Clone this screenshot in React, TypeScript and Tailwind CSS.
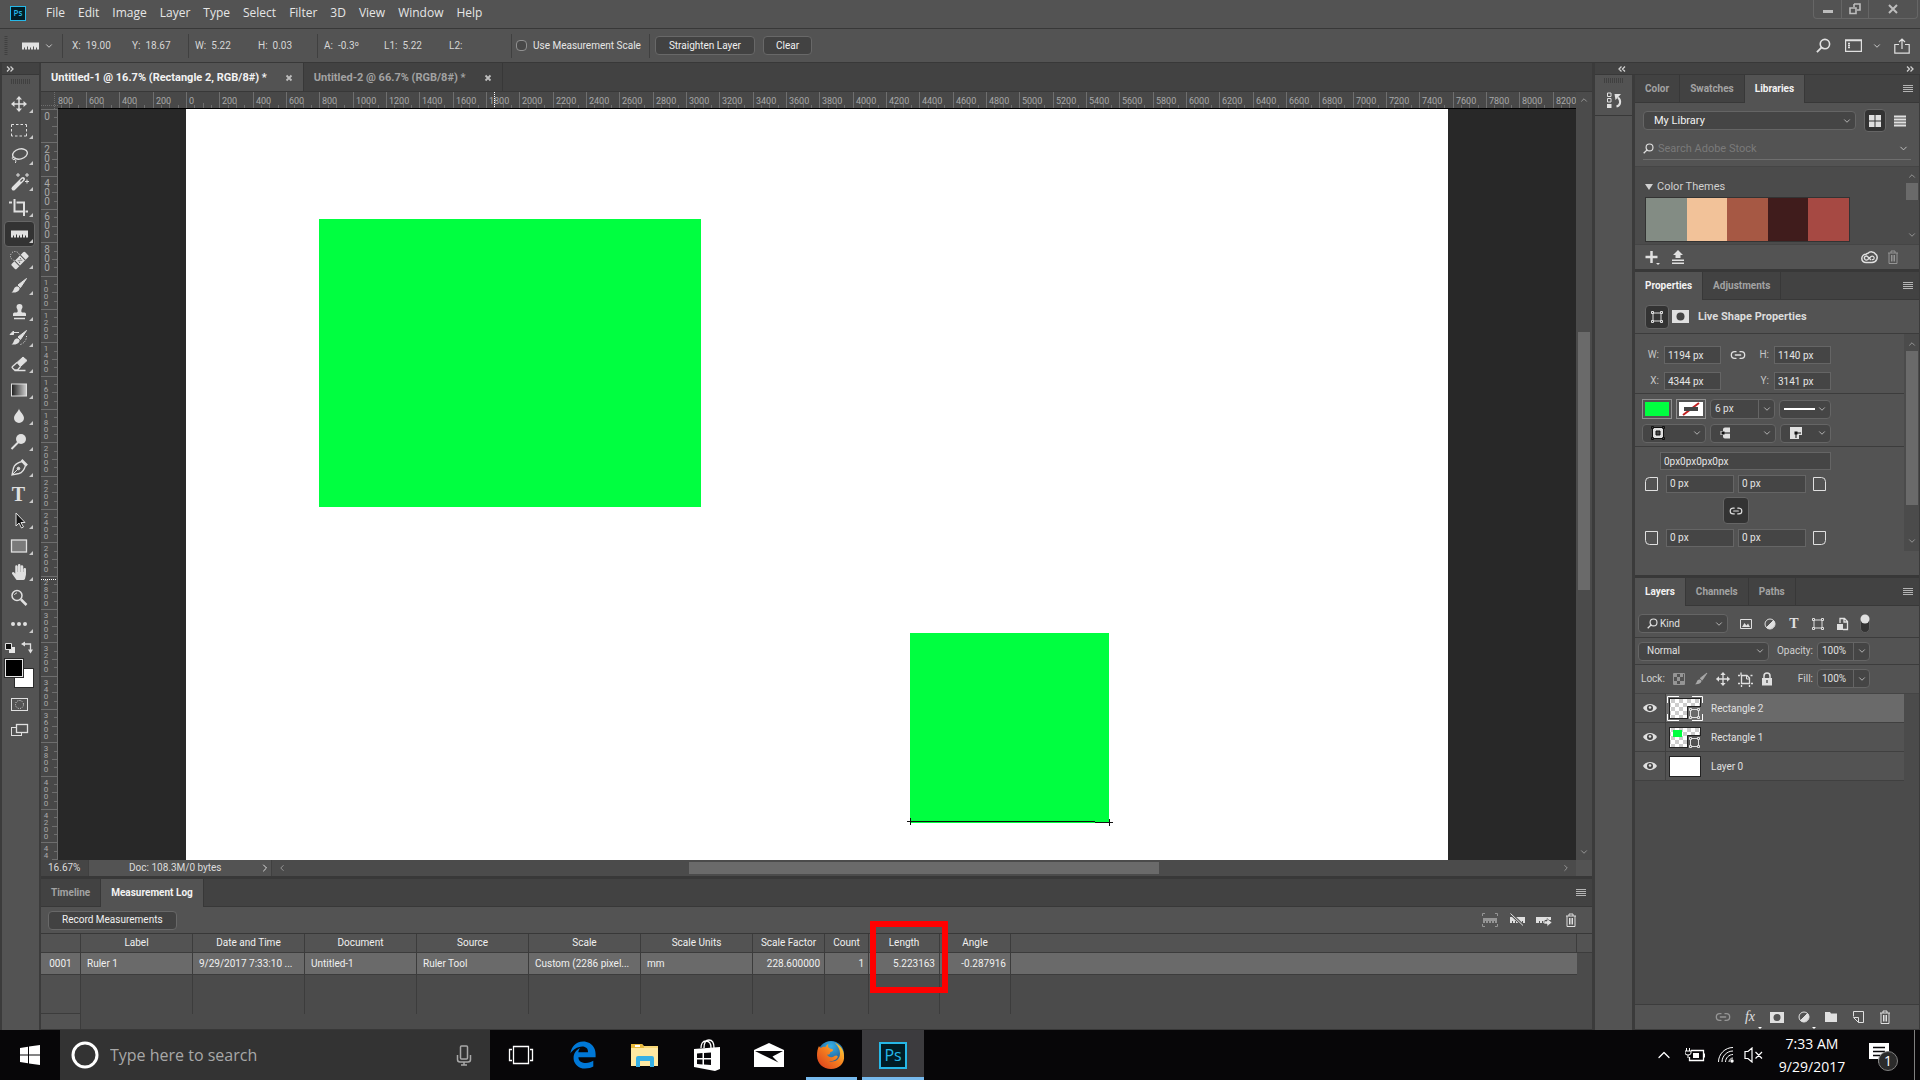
import React, { useState } from 'react'
import { ChevronDown, ChevronLeft, ChevronRight, ChevronUp, Link2 } from 'lucide-react'
import { FaEdgeLegacy, FaHandPaper } from 'react-icons/fa'

const menus = ['File', 'Edit', 'Image', 'Layer', 'Type', 'Select', 'Filter', '3D', 'View', 'Window', 'Help']

interface IconProps {
  size?: number
  className?: string
  children?: React.ReactNode
}

const Icon = ({ size = 16, className = '', children }: IconProps) => (
  <svg
    width={size}
    height={size}
    viewBox={`0 0 ${size} ${size}`}
    fill="none"
    stroke="currentColor"
    className={`shrink-0 ${className}`}
    aria-hidden="true"
  >
    {children}
  </svg>
)

/* ---------- small shared icons ---------- */

const RulerIcon = () => (
  <Icon size={20}>
    <path
      d="M2 6.5h17v7h-2v-2h-1v2h-2v-3h-1v3h-2v-2h-1v2H8v-3H7v3H5v-2H4v2H2z"
      fill="currentColor"
      stroke="none"
    />
  </Icon>
)

const MenuLines = () => (
  <Icon size={12} className="text-[#b4b4b4]">
    <path d="M1 2.5h10M1 4.5h10M1 6.5h10M1 8.5h10" />
  </Icon>
)

const DoubleArrow = ({ left = false }: { left?: boolean }) => (
  <Icon size={8} className={`text-[#cfcfcf] ${left ? 'rotate-180' : ''}`}>
    <path d="M1 1.5L3.5 4 1 6.5M4.5 1.5L7 4 4.5 6.5" strokeWidth="1.3" />
  </Icon>
)

const SearchIcon = ({ size = 16 }: { size?: number }) => (
  <svg width={size} height={size} viewBox="0 0 16 16" fill="none" stroke="currentColor" aria-hidden="true">
    <circle cx="9.5" cy="6.5" r="5" strokeWidth="1.7" />
    <path d="M6 10l-5 5" strokeWidth="2" />
  </svg>
)

const TrashIcon = ({ className = '' }: { className?: string }) => (
  <Icon className={className}>
    <path d="M3 4h10M6 4V2h4v2M4 4v10.5h8V4M6.5 6v6.5M8 6v6.5M9.5 6v6.5" />
  </Icon>
)

const ShapeIcon = () => (
  <Icon>
    <path d="M4 4h8v8H4z" />
    <path d="M2.500 2.500h2v2h-2zM11.500 2.500h2v2h-2zM2.500 11.500h2v2h-2zM11.500 11.500h2v2h-2z" className="fill-[#535353]" />
  </Icon>
)

const MaskIcon = () => (
  <Icon>
    <path fillRule="evenodd" d="M1 3h14v11H1zM8 5a3.500 3.500 0 100 7 3.500 3.500 0 000-7z" fill="currentColor" stroke="none" />
  </Icon>
)

const AdjustIcon = () => (
  <Icon>
    <circle cx="8" cy="8" r="5" />
    <path d="M11.500 4.500A5 5 0 014.500 11.500z" fill="currentColor" />
  </Icon>
)

const MoveShape = () => (
  <>
    <path d="M10 4v12M4 10h12" strokeWidth="1.5" />
    <path d="M10 2l3 3.500H7zM10 18l3-3.500H7zM2 10l3.500-3v6zM18 10l-3.500-3v6z" fill="currentColor" stroke="none" />
  </>
)

const BrushShape = () => (
  <>
    <path d="M17.500 2.500L9 9l2.500 2.500z" fill="currentColor" strokeLinejoin="round" />
    <path d="M8.500 10.500c1.500 0 2.500 1.500 2 2.700C9.500 16 6 17 2.500 16.500c2-1 2-3 3-4.700.7-1 2-1.300 3-1.300z" fill="currentColor" stroke="none" />
  </>
)

/* ---------- toolbox ---------- */

const tools: { name: string; icon: React.ReactNode }[] = [
  { name: 'Move', icon: <Icon size={20}><MoveShape /></Icon> },
  {
    name: 'Marquee',
    icon: (
      <Icon size={20}>
        <path d="M2.500 7V4.500H5M7 4.500h2.500M11.500 4.500H14M16 4.500h1.500V7M17.500 9v2.500M17.500 13.500v2.500H15M13 16h-2.500M8.500 16H6M4 16H2.500v-2.500M2.500 11.500V9" />
      </Icon>
    )
  },
  {
    name: 'Lasso',
    icon: (
      <Icon size={20}>
        <ellipse cx="11" cy="8" rx="7.500" ry="5" transform="rotate(-14 11 8)" strokeWidth="1.400" />
        <path d="M4 10.500c-1.500 1.500-.5 3.500 1 3.200 1.500-.2 2-2 .5-2.700M5.500 13c1.500 1 1.800 2.500.8 4" />
      </Icon>
    )
  },
  {
    name: 'Magic Wand',
    icon: (
      <Icon size={20}>
        <path d="M4.500 16.500L14 7" strokeWidth="4" strokeLinecap="round" />
        <path d="M11.500 9.500L14 7" strokeWidth="1.500" className="stroke-[#535353]" />
        <path d="M9 1v4M7 3h4M18 1v4M16 3h4M18 7.500v4M16 9.500h4" />
      </Icon>
    )
  },
  {
    name: 'Crop',
    icon: (
      <Icon size={20}>
        <path d="M0 4.500h3M5.500 1v12.500H14M7.500 4.500h7.500V18M16.500 13.500H19" strokeWidth="2" />
      </Icon>
    )
  },
  { name: 'Ruler', icon: <RulerIcon /> },
  {
    name: 'Healing Brush',
    icon: (
      <Icon size={20}>
        <circle cx="6" cy="6" r="4.500" strokeDasharray="1 1.500" />
        <g transform="rotate(-45 11 10.500)">
          <rect x="1.500" y="7" width="19" height="7" rx="1.500" fill="currentColor" stroke="none" />
          <path d="M7 7v7M15 7v7" className="stroke-[#535353]" />
          <path d="M9 9.500h1M12 9.500h1M9 11.500h1M12 11.500h1M10.500 10.500h1" className="stroke-[#535353]" />
        </g>
      </Icon>
    )
  },
  { name: 'Brush', icon: <Icon size={20}><BrushShape /></Icon> },
  {
    name: 'Clone Stamp',
    icon: (
      <Icon size={20}>
        <path
          d="M10.500 2a3 3 0 013 3c0 1.500-1.200 2-1.200 4 0 1 .7 1.500 1.700 1.500h1.500a1.500 1.500 0 011.500 1.500v2H4v-2a1.500 1.500 0 011.500-1.500H7c1 0 1.700-.5 1.700-1.500 0-2-1.200-2.500-1.200-4a3 3 0 013-3z"
          fill="currentColor"
          stroke="none"
        />
        <path d="M5 16.500h11" strokeWidth="1.500" />
      </Icon>
    )
  },
  {
    name: 'History Brush',
    icon: (
      <Icon size={20}>
        <BrushShape />
        <path d="M5 4.500h5M1 6.500L4.500 3v3.500z" fill="currentColor" />
        <path d="M17.500 8c0 4-2 7-6 8.500" strokeDasharray="1 1.500" />
      </Icon>
    )
  },
  {
    name: 'Eraser',
    icon: (
      <Icon size={20}>
        <path d="M8 8.500l6-5.500 4 3.500-6.500 6z" fill="currentColor" />
        <path d="M8 8.500L3.500 12.500c-.6.600-.6 1 0 1.500l2 2h3l3-3.500M5.500 16.500h11" strokeWidth="1.300" />
      </Icon>
    )
  },
  {
    name: 'Gradient',
    icon: (
      <Icon size={20}>
        <defs>
          <linearGradient id="tool-gradient">
            <stop offset="0" stopColor="#1c1c1c" />
            <stop offset="1" stopColor="#d0d0d0" />
          </linearGradient>
        </defs>
        <rect x="2.500" y="4" width="15" height="12" fill="url(#tool-gradient)" />
      </Icon>
    )
  },
  {
    name: 'Blur',
    icon: (
      <Icon size={20}>
        <path d="M10 2.500c.5 3 5 6 5 9.500a5 5 0 01-10 0c0-3.500 4.500-6.500 5-9.500z" fill="currentColor" stroke="none" />
      </Icon>
    )
  },
  {
    name: 'Dodge',
    icon: (
      <Icon size={20}>
        <circle cx="12" cy="7" r="5" fill="currentColor" stroke="none" />
        <path d="M9 10.500L2.500 17" strokeWidth="2" />
      </Icon>
    )
  },
  {
    name: 'Pen',
    icon: (
      <Icon size={20}>
        <path d="M13 3.500c-4 1-7.500 2.500-8.500 6.500L3 17l7-1.500c4-1 5.500-4.500 6.500-8z" strokeWidth="1.300" />
        <path d="M3.500 16.500L9 11" />
        <circle cx="9.500" cy="10.500" r="1.300" fill="currentColor" />
        <path d="M12.500 2l5.500 5.500" strokeWidth="2.500" />
      </Icon>
    )
  },
  { name: 'Type', icon: <span className="font-['Liberation_Serif',serif] text-xl font-bold leading-5">T</span> },
  {
    name: 'Path Selection',
    icon: (
      <Icon size={20}>
        <path d="M7 3v13l3-3 2.500 5 2-1-2.500-4.500h4z" fill="#161616" />
      </Icon>
    )
  },
  {
    name: 'Rectangle',
    icon: (
      <Icon size={20}>
        <rect x="2.500" y="4" width="15" height="12" fill="#7a7a7a" strokeWidth="1.300" />
      </Icon>
    )
  },
  { name: 'Hand', icon: <FaHandPaper size={16} /> },
  {
    name: 'Zoom',
    icon: (
      <Icon size={20}>
        <circle cx="8" cy="7.500" r="5" strokeWidth="1.500" />
        <path d="M5.500 7c.4-1.200 1.200-2 2.500-2" />
        <path d="M12 11.500l5.500 5.500" strokeWidth="2.500" />
      </Icon>
    )
  },
  {
    name: 'Edit Toolbar',
    icon: (
      <Icon size={20}>
        <path d="M4 10h.01M10 10h.01M16 10h.01" strokeWidth="4" strokeLinecap="round" />
      </Icon>
    )
  }
]

const Toolbox = () => {
  const [active, setActive] = useState('Ruler')

  return (
    <aside className="flex w-[41px] shrink-0 flex-col border-x-2 border-[#3b3b3b]">
      <div className="flex h-3 items-center border-b border-[#383838] bg-[#424242] pl-1">
        <DoubleArrow />
      </div>
      <div className="flex h-4 justify-center pt-1">
        <Grip />
      </div>
      <div className="flex flex-col pl-[2px] pr-1">
        {tools.map((tool) => (
          <button
            key={tool.name}
            aria-label={tool.name}
            onClick={() => setActive(tool.name)}
            className={`relative flex h-[26px] items-center justify-center rounded-sm border pr-[2px] ${
              active === tool.name ? 'border-[#666] bg-[#333]' : 'border-transparent'
            }`}
          >
            {tool.icon}
            {tool.name !== 'Zoom' && (
              <svg className="absolute bottom-[3px] right-px" width="4" height="4" aria-hidden="true">
                <path d="M4 0v4H0z" fill="#c8c8c8" />
              </svg>
            )}
          </button>
        ))}
      </div>
      <div className="flex justify-between pl-[2px] pr-1 pt-1">
        <button aria-label="Default colors">
          <Icon size={12}>
            <path d="M5 5h6v6H5z" fill="#e6e6e6" stroke="none" />
            <path d="M1.500 1.500h6v6h-6z" fill="#111" />
          </Icon>
        </button>
        <button aria-label="Switch colors">
          <Icon size={14}>
            <path d="M3 3h6.500v7" strokeWidth="1.300" />
            <path d="M4 .5v5L0 3zM7 8.500h5l-2.500 4z" fill="currentColor" stroke="none" />
          </Icon>
        </button>
      </div>
      <svg width="35" height="36" aria-hidden="true">
        <rect x="12.500" y="13.500" width="19" height="19" fill="#fff" stroke="#2b2b2b" />
        <rect x="2.500" y="3.500" width="19" height="19" fill="#2b2b2b" stroke="#2b2b2b" />
        <rect x="3.500" y="4.500" width="17" height="17" fill="#000" stroke="#e6e6e6" />
      </svg>
      <button aria-label="Quick mask" className="flex h-[26px] items-center justify-center pr-1">
        <Icon size={20}>
          <rect x="2.500" y="4.500" width="16" height="12" />
          <circle cx="10.500" cy="10.500" r="4" strokeDasharray="1 1.300" />
        </Icon>
      </button>
      <button aria-label="Screen mode" className="flex h-[26px] items-center justify-center pr-1">
        <Icon size={20}>
          <rect x="2.500" y="7.500" width="10" height="8" />
          <rect x="7.500" y="4.500" width="11" height="8" className="fill-[#535353]" strokeWidth="1.300" />
        </Icon>
      </button>
    </aside>
  )
}

const Grip = () => (
  <svg width="20" height="5" aria-hidden="true">
    <path d="M.5 0v5M2.500 0v5M4.500 0v5M6.500 0v5M8.500 0v5M10.500 0v5M12.500 0v5M14.500 0v5M16.500 0v5M18.500 0v5" stroke="#404040" />
  </svg>
)

/* ---------- form parts ---------- */

interface SelectProps {
  label: string
  value?: string
  className?: string
  textClass?: string
  icon?: React.ReactNode
}

const Select = ({ label, value = '', className = '', textClass = '', icon }: SelectProps) => (
  <div className={`relative flex h-[19px] items-center rounded-sm border border-[#656565] bg-[#454545] ${className}`}>
    {icon && <span className="pointer-events-none absolute left-2 flex">{icon}</span>}
    <select aria-label={label} className={`h-full w-full appearance-none bg-transparent outline-none ${textClass}`}>
      <option>{value}</option>
    </select>
    <ChevronDown size={10} className="pointer-events-none absolute right-[3px] text-[#c8c8c8]" />
  </div>
)

interface FieldProps {
  id: string
  label: string
  value: string
  showLabel?: boolean
  className?: string
}

const Field = ({ id, label, value, showLabel = false, className = '' }: FieldProps) => (
  <>
    {showLabel && (
      <label htmlFor={id} className="w-[14px] text-right text-[#c4c4c4]">
        {label}
      </label>
    )}
    <input
      id={id}
      aria-label={showLabel ? undefined : label}
      defaultValue={value}
      className={`h-[18px] min-w-0 border border-[#656565] bg-[#454545] px-[3px] text-[#e6e6e6] outline-none ${className}`}
    />
  </>
)

const Percent = ({ id, label }: { id: string; label: string }) => (
  <div className="ml-auto flex items-center gap-1">
    <label htmlFor={id} className="text-[#d0d0d0]">{label}</label>
    <div className="flex h-[19px] w-[53px] rounded-sm border border-[#656565] bg-[#454545]">
      <input id={id} defaultValue="100%" className="w-[36px] border-r border-[#656565] px-1 outline-none" />
      <button aria-label={`${label} options`} className="flex flex-1 items-center justify-center text-[#c8c8c8]">
        <ChevronDown size={10} />
      </button>
    </div>
  </div>
)

interface TabsProps {
  tabs: string[]
  active: string
}

const PanelTabs = ({ tabs, active }: TabsProps) => {
  const [current, setCurrent] = useState(active)

  return (
    <div className="flex h-7 shrink-0 bg-[#424242] font-bold" role="tablist">
      {tabs.map((tab) => (
        <button
          key={tab}
          role="tab"
          aria-selected={tab === current}
          onClick={() => setCurrent(tab)}
          className={`border-r border-[#383838] px-[10px] ${
            tab === current ? 'bg-[#535353] text-[#f2f2f2]' : 'border-b text-[#a2a2a2]'
          }`}
        >
          {tab}
        </button>
      ))}
      <div className="flex flex-1 items-center justify-end border-b border-[#383838] pr-[5px]">
        <button aria-label="Panel menu">
          <MenuLines />
        </button>
      </div>
    </div>
  )
}

/* ---------- document window ---------- */

const UNITS_PER_PX = 6
const ORIGIN_X = 128

const range = (from: number, to: number, step: number) => {
  const out: number[] = []
  for (let v = from; v <= to; v += step) out.push(v)
  return out
}

const tickLength = (v: number) => (v % 200 === 0 ? 16 : v % 100 === 0 ? 5 : 3)

const TopRuler = () => (
  <svg className="block h-4 w-full min-w-0 flex-1 bg-[#484848] text-[9px]" aria-label="Horizontal ruler">
    {range(-750, 8650, 50).map((v) => {
      const x = Math.round(ORIGIN_X + v / UNITS_PER_PX) + 0.5
      return <path key={v} d={`M${x} 16v-${tickLength(v)}`} stroke="#6e6e6e" />
    })}
    {range(-800, 8200, 200).map((v) => (
      <text key={v} x={Math.max(0, Math.round(ORIGIN_X + v / UNITS_PER_PX) + 3)} y="12" fill="#a8a8a8">
        {Math.abs(v)}
      </text>
    ))}
    <path d="M436.500 0v16" stroke="#fff" strokeDasharray="1 1" />
  </svg>
)

const LeftRuler = () => (
  <svg className="block h-full w-[17px] shrink-0 border-r border-[#6e6e6e] bg-[#484848]" aria-label="Vertical ruler">
    {range(0, 4500, 50).map((v) => {
      const y = Math.round(v / UNITS_PER_PX) + 0.5
      return <path key={v} d={`M16 ${y}h-${tickLength(v)}`} stroke="#6e6e6e" />
    })}
    {range(0, 4400, 200).map((v) => {
      const small = v >= 1000
      // only the first digits of the last label are inside the window
      const digits = v === 4400 ? ['4', '4'] : String(v).split('')
      return digits.map((digit, i) => (
        <text
          key={`${v}-${i}`}
          x={small ? 5 : 6}
          y={Math.round(v / UNITS_PER_PX) + (small ? 9 + i * 7 : 11 + i * 9)}
          className={small ? 'text-[8px]' : 'text-[10px]'}
          textAnchor="middle"
          fill="#a8a8a8"
        >
          {digit}
        </text>
      ))
    })}
    <path d="M0 470.500h16" stroke="#fff" strokeDasharray="1 1" />
  </svg>
)

const Artboard = () => (
  <svg className="block h-full min-w-0 flex-1 bg-[#282828]" aria-label="Untitled-1">
    <rect x="128" y="0" width="1262" height="100%" fill="#fff" />
    <rect x="261" y="110" width="382" height="288" fill="#00ff40" />
    <rect x="852" y="524" width="199" height="190" fill="#00ff40" />
    <path d="M852 712.500h185M1037 713.500h14M852.500 709v7M849 712.500h7M1051.500 710v7M1048 713.500h7" stroke="#111" />
  </svg>
)

const DocumentWindow = () => (
  <section className="flex min-h-0 flex-1 flex-col">
    <div className="flex h-[29px] shrink-0 border-b border-[#383838] bg-[#424242] text-[11px] font-bold">
      <div className="flex items-center gap-[18px] border-r border-[#383838] bg-[#535353] px-[10px] pt-px text-[#f2f2f2]">
        <button>Untitled-1 @ 16.7% (Rectangle 2, RGB/8#) *</button>
        <button aria-label="Close Untitled-1"><CloseIcon /></button>
      </div>
      <div className="flex items-center gap-[18px] border-r border-[#383838] px-[10px] pt-px text-[#a2a2a2]">
        <button>Untitled-2 @ 66.7% (RGB/8#) *</button>
        <button aria-label="Close Untitled-2"><CloseIcon /></button>
      </div>
    </div>

    <div className="flex min-h-0 flex-1">
      <div className="flex min-w-0 flex-1 flex-col">
        <div className="flex h-[17px] shrink-0 bg-[#484848]">
          <svg width="17" height="17" aria-hidden="true">
            <path d="M13.500 0v17M0 13.500h17" stroke="#6e6e6e" strokeDasharray="1 1" />
          </svg>
          <div className="flex min-w-0 flex-1 border-b border-black">
            <TopRuler />
          </div>
        </div>
        <div className="flex min-h-0 flex-1">
          <LeftRuler />
          <Artboard />
        </div>
      </div>
      <div className="flex w-4 flex-col items-center bg-[#4b4b4b] text-[#a2a2a2]">
        <button aria-label="Scroll up" className="flex h-4 items-center"><ChevronUp size={10} /></button>
        <div className="grow-[224]" />
        <div className="w-3 grow-[258] bg-[#6a6a6a]" />
        <div className="grow-[254]" />
        <button aria-label="Scroll down" className="flex h-4 items-center"><ChevronDown size={10} /></button>
      </div>
    </div>

    <div className="flex h-4 shrink-0 bg-[#4b4b4b] text-[#dcdcdc]">
      <span className="w-[47px] bg-[#454545] pl-[7px] leading-4">16.67%</span>
      <div className="flex w-[184px] items-center border-x border-[#404040] bg-[#535353] pl-10">
        <span className="leading-4">Doc: 108.3M/0 bytes</span>
        <button aria-label="Status options" className="ml-auto"><ChevronRight size={12} /></button>
      </div>
      <button aria-label="Scroll left" className="flex w-5 items-center justify-center text-[#a2a2a2]">
        <ChevronLeft size={10} />
      </button>
      <div className="flex flex-1 items-center">
        <div className="grow-[398]" />
        <div className="h-3 grow-[470] bg-[#6a6a6a]" />
        <div className="grow-[398]" />
      </div>
      <button aria-label="Scroll right" className="flex w-5 items-center justify-center text-[#a2a2a2]">
        <ChevronRight size={10} />
      </button>
      <div className="w-4 bg-[#535353]" />
    </div>
  </section>
)

const CloseIcon = () => (
  <Icon size={8} className="text-[#bdbdbd]">
    <path d="M1.500 1.500l5 5M6.500 1.500l-5 5" strokeWidth="1.800" />
  </Icon>
)

/* ---------- measurement log ---------- */

const columns = [
  { label: 'Label', value: 'Ruler 1', width: 'w-28' },
  { label: 'Date and Time', value: '9/29/2017 7:33:10 ...', width: 'w-28' },
  { label: 'Document', value: 'Untitled-1', width: 'w-28' },
  { label: 'Source', value: 'Ruler Tool', width: 'w-28' },
  { label: 'Scale', value: 'Custom (2286 pixel...', width: 'w-28' },
  { label: 'Scale Units', value: 'mm', width: 'w-28' },
  { label: 'Scale Factor', value: '228.600000', width: 'w-[72px]', numeric: true },
  { label: 'Count', value: '1', width: 'w-[44px]', numeric: true },
  { label: 'Length', value: '5.223163', width: 'w-[71px]', numeric: true },
  { label: 'Angle', value: '-0.287916', width: 'w-[71px]', numeric: true }
]

const MeasurementLog = () => (
  <section className="shrink-0 border-t-[3px] border-[#383838]">
    <PanelTabs tabs={['Timeline', 'Measurement Log']} active="Measurement Log" />
    <div className="flex h-[26px] items-center gap-[11px] pl-[7px] pr-[13px]">
      <button className="mr-auto h-[19px] rounded-sm border border-[#686868] bg-[#424242] px-[13px] text-[#f0f0f0]">
        Record Measurements
      </button>
      <button aria-label="Measure region" className="text-[#959595]">
        <Icon>
          <path d="M.5 4V1.500H3M13 1.500h2.500V4M.5 12v2.500H3M13 14.500h2.500V12" />
          <path d="M1 6h14v5h-2V9h-1v2h-2V9H9v2H7V9H6v2H4V9H3v2H1z" fill="currentColor" stroke="none" />
        </Icon>
      </button>
      <button aria-label="Hide measurements">
        <Icon>
          <path d="M1 5h15v6h-2V9h-1v2h-2V9h-1v2H7V9H6v2H4V9H3v2H1z" fill="currentColor" stroke="none" />
          <path d="M1.500 1.500l12.500 12" stroke="#535353" strokeWidth="3" />
          <path d="M1.500 1.500l12.500 12" />
        </Icon>
      </button>
      <button aria-label="Export measurements">
        <Icon>
          <path d="M0 5h15v3H9v3H7V9H6v2H4V9H3v2H0z" fill="currentColor" stroke="none" />
          <path d="M8 9h3V6.500l5 4-5 4V12H8z" fill="currentColor" stroke="#535353" strokeWidth=".6" />
        </Icon>
      </button>
      <button aria-label="Delete measurements"><TrashIcon /></button>
    </div>

    <div className="relative flex border-y border-[#383838] bg-[#4b4b4b] text-[#f0f0f0]">
      <table className="min-w-0 flex-1 table-fixed border-separate border-spacing-0">
        <thead>
          <tr className="h-[19px] bg-[#535353]">
            <th className="w-10 border-b border-r border-[#3c3c3c] p-0" aria-label="Row" />
            {columns.map((col) => (
              <th key={col.label} className={`${col.width} border-b border-r border-[#3c3c3c] p-0 font-normal`}>
                {col.label}
              </th>
            ))}
            <th className="border-b border-r border-[#3c3c3c] p-0" aria-label="Spare" />
          </tr>
        </thead>
        <tbody>
          <tr className="h-[22px] bg-[#6a6a6a]">
            <td className="border-b border-r border-[#3c3c3c] p-0 text-center">0001</td>
            {columns.map((col) => (
              <td
                key={col.label}
                className={`overflow-hidden whitespace-nowrap border-b border-r border-[#3c3c3c] px-0 ${
                  col.numeric ? 'pr-1 text-right' : 'pl-[6px]'
                }`}
              >
                {col.value}
              </td>
            ))}
            <td className="border-b border-[#3c3c3c] p-0" />
          </tr>
          <tr className="h-[39px]">
            <td className="border-b border-r border-[#3c3c3c] bg-[#505050] p-0" />
            {columns.map((col) => (
              <td key={col.label} className="border-r border-[#3c3c3c] p-0" />
            ))}
            <td className="p-0" />
          </tr>
          <tr className="h-[15px]">
            <td className="border-r border-[#3c3c3c] bg-[#535353] p-0" />
            <td colSpan={11} className="p-0" />
          </tr>
        </tbody>
      </table>
      <div className="w-[15px] bg-[#4b4b4b]">
        <div className="h-[19px] border-b border-[#3c3c3c] bg-[#535353]" />
      </div>
      {/* highlight around the Length column */}
      <div className="pointer-events-none absolute -top-[13px] left-[829px] h-[72px] w-[78px] border-[6px] border-[#ff0000]" />
    </div>
  </section>
)

/* ---------- right hand panels ---------- */

const swatches = ['bg-[#838c84]', 'bg-[#f2c299]', 'bg-[#a65844]', 'bg-[#401c1c]', 'bg-[#a64943]']

const LibrariesPanel = () => (
  <section className="border-b-[3px] border-[#383838]">
    <PanelTabs tabs={['Color', 'Swatches', 'Libraries']} active="Libraries" />
    <div className="flex items-center gap-2 pl-2 pr-[13px] pt-[6px]">
      <Select label="Library" value="My Library" className="flex-1 text-[11px] text-[#f2f2f2]" textClass="pl-[10px]" />
      <div className="flex items-center gap-2">
        <button aria-label="Grid view" className="flex h-[23px] w-[22px] items-center justify-center rounded-sm border border-[#656565] bg-[#333]">
          <Icon size={12}>
            <path d="M0 0h5.500v5.500H0zM6.500 0H12v5.500H6.500zM0 6.500h5.500V12H0zM6.500 6.500H12V12H6.500z" fill="currentColor" stroke="none" />
          </Icon>
        </button>
        <button aria-label="List view">
          <Icon size={12}>
            <path d="M0 1.500h12M0 4.500h12M0 7.500h12M0 10.500h12" strokeWidth="2" />
          </Icon>
        </button>
      </div>
    </div>
    <div className="mx-2 mt-[6px] flex h-[22px] items-center gap-1 border-b border-[#6e6e6e]">
      <SearchIcon size={11} />
      <input
        aria-label="Search Adobe Stock"
        placeholder="Search Adobe Stock"
        className="min-w-0 flex-1 text-[11px] outline-none placeholder:text-[#7a7a7a]"
      />
      <ChevronDown size={11} className="mr-[2px] text-[#c8c8c8]" />
    </div>
    <div className="mt-[6px] flex h-[79px] border-y border-[#454545] bg-[#4b4b4b]">
      <div className="flex-1 pl-[10px] pt-3">
        <button className="flex h-4 items-center gap-1 text-[11px] text-[#d0d0d0]">
          <Icon size={8}><path d="M0 1h8L4 7z" fill="currentColor" stroke="none" /></Icon>
          Color Themes
        </button>
        <div className="mt-[2px] flex h-[45px] w-[205px] border border-[#333]">
          {swatches.map((color) => (
            <div key={color} className={`flex-1 ${color}`} />
          ))}
        </div>
      </div>
      <div className="flex w-[14px] flex-col items-center py-1 text-[#a2a2a2]">
        <ChevronUp size={10} />
        <div className="mt-[2px] h-[17px] w-3 bg-[#6a6a6a]" />
        <ChevronDown size={10} className="mt-auto" />
      </div>
    </div>
    <div className="flex h-6 items-center pl-[9px] pr-[18px]">
      <button aria-label="Add content" className="mr-[10px]">
        <Icon>
          <path d="M7.500 2v12M1.500 8h12" strokeWidth="2.500" />
          <path d="M12 14h4l-2 2z" fill="currentColor" stroke="none" />
        </Icon>
      </button>
      <button aria-label="Upload">
        <Icon>
          <path d="M8 1l5 5H10.500v3h-5V6H3zM2 10.500h12V12H2zM2 13.500h12V15H2z" fill="currentColor" stroke="none" />
        </Icon>
      </button>
      <button aria-label="Creative Cloud" className="ml-auto mr-[7px]">
        <svg width="17" height="13" viewBox="0 0 17 13" fill="none" stroke="currentColor" aria-hidden="true">
          <path d="M7 2.200C9 .2 13 .4 14.500 3.200c1.500 1 2 3 1.300 5-.8 2-2.500 3.300-4.800 3.300H5C2.500 11.500.8 9.800.8 7.500.8 5 2.800 3.200 5 3.200c.5-.5 1.200-.8 2-1z" strokeWidth="1.500" />
          <path d="M10 9L6.800 5.800a1.900 1.900 0 00-2.900 2.500c.8.9 2 .9 3 .2M6.800 8.500l3.300-3a1.900 1.900 0 012.700 2.600c-.6.600-1.200.7-2 .5" strokeWidth="1.300" />
        </svg>
      </button>
      <button aria-label="Delete library item"><TrashIcon className="text-[#959595]" /></button>
    </div>
  </section>
)

const corners = [
  'M2.500 14.500h12v-13h-8a4 4 0 00-4 4z',
  'M1.500 14.500h12v-9a4 4 0 00-4-4h-8z',
  'M2.500 1.500h12v13h-8a4 4 0 01-4-4z',
  'M1.500 1.500h12v9a4 4 0 01-4 4h-8z'
]

const Corner = ({ index }: { index: number }) => (
  <Icon>
    <path d={corners[index]} />
  </Icon>
)

const PropertiesPanel = () => (
  <section className="flex h-[306px] flex-col border-b-[3px] border-[#383838]">
    <PanelTabs tabs={['Properties', 'Adjustments']} active="Properties" />
    <div className="flex h-[34px] items-center border-b border-[#3c3c3c] pl-[10px]">
      <button aria-label="Shape" className="flex h-6 w-6 items-center justify-center rounded-sm border border-[#656565] bg-[#333]">
        <ShapeIcon />
      </button>
      <button aria-label="Mask" className="ml-[3px]">
        <svg width="17" height="13" aria-hidden="true">
          <path d="M0 0h17v13H0z" fill="#e0e0e0" />
          <circle cx="8.500" cy="6.500" r="4" fill="#454545" />
        </svg>
      </button>
      <h2 className="ml-[9px] pt-px text-[11px] font-bold text-[#dcdcdc]">Live Shape Properties</h2>
    </div>
    <div className="flex h-[217px]">
      <div className="flex-1">
        <div className="flex h-[60px] flex-col gap-2 border-b border-[#3c3c3c] pl-[10px] pt-3">
          <div className="flex items-center gap-[5px]">
            <Field id="w" label="W:" value="1194 px" showLabel className="w-[57px]" />
            <Link2 size={16} className="mx-1" />
            <Field id="h" label="H:" value="1140 px" showLabel className="w-[57px]" />
          </div>
          <div className="flex items-center gap-[5px]">
            <Field id="x" label="X:" value="4344 px" showLabel className="w-[57px]" />
            <span className="mx-1 w-4" />
            <Field id="y" label="Y:" value="3141 px" showLabel className="w-[57px]" />
          </div>
        </div>
        <div className="flex h-[53px] flex-col gap-1 border-b border-[#3c3c3c] pl-[7px] pt-[5px]">
          <div className="flex h-5 items-center gap-1">
            <button aria-label="Fill" className="h-5 w-[30px] border border-[#909090] p-[2px]">
              <span className="block h-full bg-[#00ff40]" />
            </button>
            <button aria-label="Stroke" className="h-5 w-[30px] border border-[#909090] p-[2px]">
              <svg width="24" height="14" aria-hidden="true">
                <path d="M0 0h24v14H0z" fill="#fff" />
                <path d="M20 1L4 13" stroke="#c02020" strokeWidth="2" />
                <path d="M5 5h14v4H5z" fill="#454545" />
              </svg>
            </button>
            <div className="flex h-5 w-[65px] rounded-sm border border-[#656565] bg-[#454545]">
              <input aria-label="Stroke width" defaultValue="6 px" className="w-12 border-r border-[#656565] px-1 outline-none" />
              <button aria-label="Stroke width options" className="flex flex-1 items-center justify-center text-[#c8c8c8]">
                <ChevronDown size={10} />
              </button>
            </div>
            <Select
              label="Stroke style"
              className="w-[52px]"
              icon={<span className="-ml-1 block h-[2px] w-[31px] bg-white" />}
            />
          </div>
          <div className="flex h-5 items-center gap-1">
            <Select
              label="Stroke alignment"
              className="w-16"
              icon={
                <Icon size={14}>
                  <path d="M3.500 3.500h7v7h-7z" strokeWidth="3" />
                  <path d="M3 1.500h8M3 12.500h8M1.500 3v8M12.500 3v8M5 5h4v4H5z" stroke="#111" />
                  <path d="M.5.500h2v2h-2zM11.500.500h2v2h-2zM.5 11.500h2v2h-2zM11.500 11.500h2v2h-2z" stroke="#111" />
                </Icon>
              }
            />
            <Select
              label="Stroke caps"
              className="w-[66px]"
              icon={
                <Icon size={14}>
                  <path d="M6 1.500h5v11H6q-2 0-2-2V9H1.500V5H4V3.500q0-2 2-2z" fill="currentColor" stroke="none" />
                  <path d="M5 7h6" stroke="#111" />
                  <path d="M2.500 5.500h3v3h-3z" fill="#111" stroke="none" />
                </Icon>
              }
            />
            <Select
              label="Stroke corners"
              className="w-[51px]"
              icon={
                <Icon size={14}>
                  <path d="M1 1h12v8h-3v4H1z" fill="currentColor" stroke="none" />
                  <path d="M7 12V7h5" stroke="#111" />
                  <path d="M5.500 5.500h3v3h-3z" fill="#111" stroke="none" />
                </Icon>
              }
            />
          </div>
        </div>
        <div className="flex flex-col gap-1 pl-2 pt-[5px]">
          <div className="flex pl-[17px]">
            <Field id="radii" label="Corner radii" value="0px0px0px0px" className="w-[171px]" />
          </div>
          <div className="flex h-[19px] items-center gap-1">
            <Corner index={0} />
            <span className="flex gap-1 pl-[3px] pr-[2px]">
              <Field id="tl" label="Top left radius" value="0 px" className="w-[68px]" />
              <Field id="tr" label="Top right radius" value="0 px" className="w-[68px]" />
            </span>
            <Corner index={1} />
          </div>
          <button aria-label="Link radii" className="ml-20 flex h-[27px] w-[26px] items-center justify-center rounded-sm border border-[#656565] bg-[#333]">
            <Link2 size={14} />
          </button>
          <div className="flex h-[19px] items-center gap-1">
            <Corner index={2} />
            <span className="flex gap-1 pl-[3px] pr-[2px]">
              <Field id="bl" label="Bottom left radius" value="0 px" className="w-[68px]" />
              <Field id="br" label="Bottom right radius" value="0 px" className="w-[68px]" />
            </span>
            <Corner index={3} />
          </div>
        </div>
      </div>
      <div className="flex w-[15px] flex-col items-center bg-[#4b4b4b] py-[5px] text-[#a2a2a2]">
        <ChevronUp size={10} />
        <div className="mt-[2px] h-[154px] w-3 bg-[#6a6a6a]" />
        <ChevronDown size={10} className="mt-auto" />
      </div>
    </div>
  </section>
)

const layers = [
  { name: 'Rectangle 2', shape: true, fill: false },
  { name: 'Rectangle 1', shape: true, fill: true },
  { name: 'Layer 0', shape: false, fill: false }
]

const LayerThumb = ({ shape, fill, selected }: { shape: boolean; fill: boolean; selected: boolean }) => (
  <svg width="36" height="27" className="shrink-0" aria-hidden="true">
    <defs>
      <pattern id="checker" width="8" height="8" patternUnits="userSpaceOnUse">
        <path d="M0 0h8v8H0z" fill="#fff" />
        <path d="M0 0h4v4H0zM4 4h4v4H4z" fill="#ccc" />
      </pattern>
    </defs>
    <rect x="2.500" y="3.500" width="31" height="20" fill={shape ? 'url(#checker)' : '#fff'} stroke="#222" />
    {fill && <rect x="6" y="6" width="9" height="7" fill="#00ff40" />}
    {shape && (
      <>
        <path d="M20 24.500V11.500h14v13z" fill={selected ? '#6a6a6a' : '#535353'} stroke="none" />
        <path d="M20.500 24V11.500H34" stroke="#222" fill="none" />
        <g stroke="#e0e0e0" fill={selected ? '#6a6a6a' : '#535353'}>
          <path d="M23.500 14.500h8v8h-8z" />
          <path d="M22.500 13.500h2v2h-2zM30.500 13.500h2v2h-2zM22.500 21.500h2v2h-2zM30.500 21.500h2v2h-2z" />
        </g>
      </>
    )}
    {selected && <path d="M.5 8V1.500H12M25 1.500h10.500V8M.5 19v6.500H12M25 25.500h10.500V19" stroke="#fff" fill="none" />}
  </svg>
)

const LayersPanel = () => {
  const [selected, setSelected] = useState('Rectangle 2')

  return (
    <section className="flex min-h-0 flex-1 flex-col">
      <PanelTabs tabs={['Layers', 'Channels', 'Paths']} active="Layers" />
      <div className="flex h-8 items-center gap-2 border-b border-[#3c3c3c] pl-[3px] pt-1">
        <Select label="Filter kind" value="Kind" className="mr-[2px] w-[90px]" textClass="pl-[21px]" icon={<SearchIcon size={11} />} />
        <button aria-label="Filter pixel layers">
          <Icon>
            <path d="M2.500 3.500h11v9h-11z" />
            <path d="M4 11l2.500-4 2 2.500 1.500-2 2 3.500z" fill="currentColor" stroke="none" />
          </Icon>
        </button>
        <button aria-label="Filter adjustment layers"><AdjustIcon /></button>
        <button aria-label="Filter type layers" className="w-4 font-['Liberation_Serif',serif] text-sm font-bold leading-4">T</button>
        <button aria-label="Filter shape layers"><ShapeIcon /></button>
        <button aria-label="Filter smart objects">
          <Icon>
            <path d="M6 7V2.500h4.500l3 3v8H9M10 2.500V6h3.500" strokeWidth="1.300" />
            <path d="M3 8h6v6H3z" fill="currentColor" stroke="none" />
          </Icon>
        </button>
        <button aria-label="Toggle filtering" className="ml-[2px]">
          <svg width="10" height="19" aria-hidden="true">
            <rect x=".5" y=".5" width="9" height="18" rx="4.500" fill="#333" stroke="#5e5e5e" />
            <circle cx="5" cy="5" r="4.500" fill="#e0e0e0" />
          </svg>
        </button>
      </div>
      <div className="flex h-[27px] items-center border-b border-[#3c3c3c] pl-[3px] pr-[49px]">
        <Select label="Blend mode" value="Normal" className="w-[131px]" textClass="pl-2" />
        <Percent id="opacity" label="Opacity:" />
      </div>
      <div className="flex h-7 items-center gap-[6px] pb-px pl-[6px] pr-[49px]">
        <span className="text-[#d0d0d0]">Lock:</span>
        <button aria-label="Lock transparent pixels" className="text-[#959595]">
          <Icon>
            <path d="M2.500 2.500h11v11h-11z" />
            <path d="M3 3h3v3H3zM9 3h3v3H9zM6 6h3v4H6zM3 10h3v3H3zM9 10h4v3H9z" fill="currentColor" stroke="none" />
          </Icon>
        </button>
        <button aria-label="Lock image pixels" className="text-[#a8a8a8]">
          <svg width="16" height="16" viewBox="0 0 20 20" stroke="currentColor" fill="none" aria-hidden="true"><BrushShape /></svg>
        </button>
        <button aria-label="Lock position">
          <svg width="16" height="16" viewBox="1 1 18 18" stroke="currentColor" fill="none" aria-hidden="true"><MoveShape /></svg>
        </button>
        <button aria-label="Lock artboard nesting">
          <Icon>
            <path d="M4 1.500v3M1 4.500h2M4.500 4.500v8h8V7L10 4.500zM12.500 14v2M14 12.500h2M4.500 14v2M1 12.500h2M13.500 4.500h2" strokeWidth="1.300" />
            <path d="M9.500 4.500V8h3.500" />
          </Icon>
        </button>
        <button aria-label="Lock all">
          <Icon>
            <path d="M5 7V5a3 3 0 016 0v2" strokeWidth="1.500" />
            <path fillRule="evenodd" d="M3 7h10v7.500H3zM7.300 9v3h1.400V9z" fill="currentColor" stroke="none" />
          </Icon>
        </button>
        <Percent id="fill" label="Fill:" />
      </div>
      <div className="min-h-0 flex-1 border-t border-[#454545] bg-[#4b4b4b] pr-[15px]">
        {layers.map((layer) => (
          <div key={layer.name} className="flex h-[29px] border-b border-[#404040] bg-[#535353]">
            <button aria-label={`Toggle ${layer.name}`} className="flex w-[31px] items-center justify-center border-r border-[#404040]">
              <svg width="14" height="10" aria-hidden="true">
                <path d="M0 5c3-5.500 11-5.500 14 0-3 5.500-11 5.500-14 0z" fill="#e0e0e0" />
                <circle cx="7" cy="5" r="3" fill="#454545" />
                <circle cx="7" cy="4.500" r="1.300" fill="#e0e0e0" />
              </svg>
            </button>
            <button
              onClick={() => setSelected(layer.name)}
              className={`flex flex-1 items-center gap-2 pl-[1px] text-left ${selected === layer.name ? 'bg-[#6a6a6a]' : ''}`}
            >
              <LayerThumb shape={layer.shape} fill={layer.fill} selected={selected === layer.name} />
              <span className="pt-[2px]">{layer.name}</span>
            </button>
          </div>
        ))}
      </div>
      <div className="flex h-[26px] shrink-0 items-center justify-end gap-[11px] border-y border-[#3c3c3c] pr-[26px]">
        <button aria-label="Link layers" className="text-[#959595]"><Link2 size={16} /></button>
        <button aria-label="Layer style" className="relative w-4 font-['Liberation_Serif',serif] text-sm italic leading-4">
          fx
          <MenuMark />
        </button>
        <button aria-label="Add mask"><MaskIcon /></button>
        <button aria-label="New adjustment layer" className="relative">
          <AdjustIcon />
          <MenuMark />
        </button>
        <button aria-label="New group">
          <Icon><path d="M2 3h5l1 1.500h6V13H2z" fill="currentColor" stroke="none" /></Icon>
        </button>
        <button aria-label="New layer">
          <Icon>
            <path d="M3.500 7.500v-5h10v11h-5" />
            <path d="M3.500 8.500h5v5z" />
          </Icon>
        </button>
        <button aria-label="Delete layer"><TrashIcon /></button>
      </div>
    </section>
  )
}

const MenuMark = () => (
  <svg className="absolute -bottom-1 -right-1" width="4" height="2" aria-hidden="true">
    <path d="M0 0h4L2 2z" fill="#fff" />
  </svg>
)

const RightDock = () => (
  <aside className="flex w-[328px] shrink-0 flex-col border-l-[3px] border-[#3b3b3b]">
    <div className="flex h-3 shrink-0 items-center justify-between border-b border-[#383838] bg-[#424242] pl-[23px] pr-[6px]">
      <DoubleArrow left />
      <DoubleArrow />
    </div>
    <div className="flex min-h-0 flex-1">
      <div className="flex w-[37px] flex-col items-center">
        <div className="flex h-[41px] w-full flex-col items-center gap-2 border-b border-[#383838] pt-[3px]">
          <Grip />
          <button aria-label="History">
            <Icon size={18}>
              <path d="M2.500 2h3.500v3.500H2.500zM2.500 7.500h3.500V11H2.500z" />
              <path d="M2 13h4.500v4H2z" fill="currentColor" stroke="none" />
              <path d="M11.500 15.500c4-1 5-6 1.500-9" strokeWidth="2" />
              <path d="M9.500 3h6.500l-5.500 6z" fill="currentColor" stroke="none" />
            </Icon>
          </button>
        </div>
      </div>
      <div className="flex min-w-0 flex-1 flex-col border-l-[3px] border-r border-[#3b3b3b]">
        <LibrariesPanel />
        <PropertiesPanel />
        <LayersPanel />
      </div>
    </div>
  </aside>
)

/* ---------- top bars ---------- */

const PsLogo = ({ className, textClass }: { className: string; textClass: string }) => (
  <span className={`flex items-center justify-center border-[#26b8e8] bg-[#001d26] font-['Open_Sans',sans-serif] text-[#26b8e8] ${className}`}>
    <span className={textClass}>Ps</span>
  </span>
)

const MenuBar = () => (
  <header className="flex h-[29px] shrink-0 items-start justify-between border-b border-[#383838] pl-[10px] pr-[2px]">
    <div className="flex h-[26px] items-center">
      <PsLogo className="h-[15px] w-4 border" textClass="text-[8px] font-semibold" />
      <nav className="ml-5 flex gap-[13px] font-['Open_Sans',sans-serif] text-xs text-[#e6e6e6]">
        {menus.map((menu) => (
          <button key={menu}>{menu}</button>
        ))}
      </nav>
    </div>
    <div className="flex h-[19px] divide-x divide-[#666] rounded-b border border-t-0 border-[#666] text-[#bdbdbd]">
      <button aria-label="Minimize" className="flex w-7 justify-center pt-[10px]">
        <span className="block h-[3px] w-[10px] bg-[#bdbdbd]" />
      </button>
      <button aria-label="Restore" className="flex w-[27px] items-center justify-center">
        <Icon size={12}>
          <path d="M5 1h6v6H8M5 4V1" strokeWidth="1.600" />
          <path d="M1 5h6v5.500H1z" strokeWidth="1.600" />
        </Icon>
      </button>
      <button aria-label="Close" className="flex w-12 items-center justify-center">
        <Icon size={10}><path d="M1 1l8 8M9 1L1 9" strokeWidth="2" /></Icon>
      </button>
    </div>
  </header>
)

const Divider = () => <span className="h-6 w-px shrink-0 bg-[#404040]" />

const options = [
  [
    { label: 'X:', value: '19.00', width: 'w-[60px]' },
    { label: 'Y:', value: '18.67', width: 'w-[56px]' }
  ],
  [
    { label: 'W:', value: '5.22', width: 'w-[63px]' },
    { label: 'H:', value: '0.03', width: 'w-[59px]' }
  ],
  [
    { label: 'A:', value: '-0.3º', width: 'w-[60px]' },
    { label: 'L1:', value: '5.22', width: 'w-[65px]' },
    { label: 'L2:', value: '', width: 'w-[62px]' }
  ]
]

const OptionsBar = () => (
  <div className="flex h-[34px] shrink-0 items-center border-b border-[#383838] pr-[10px]">
    <svg className="ml-1" width="4" height="20" aria-hidden="true">
      <path d="M2 0v20" stroke="#404040" strokeWidth="3" strokeDasharray="1 1" />
    </svg>
    <button aria-label="Ruler tool presets" className="ml-3 flex w-[42px] items-center gap-1">
      <RulerIcon />
      <ChevronDown size={10} />
    </button>
    {options.map((group, i) => (
      <React.Fragment key={i}>
        <Divider />
        <div className={`flex text-[#d6d6d6] ${i === 0 ? 'pl-[9px]' : 'pl-[6px]'}`}>
          {group.map((item) => (
            <span key={item.label} className={`flex gap-[5px] ${item.width}`}>
              <span>{item.label}</span>
              <span>{item.value}</span>
            </span>
          ))}
        </div>
      </React.Fragment>
    ))}
    <Divider />
    <label className="flex items-center gap-[6px] pl-1 pr-2 text-[#e6e6e6]">
      <input type="checkbox" className="h-[11px] w-[11px] appearance-none rounded-sm border border-[#909090] bg-[#484848]" />
      Use Measurement Scale
    </label>
    <Divider />
    <button className="ml-[5px] h-[19px] rounded-sm border border-[#686868] bg-[#424242] px-[13px] text-[#f0f0f0]">
      Straighten Layer
    </button>
    <button className="ml-2 h-[19px] rounded-sm border border-[#686868] bg-[#424242] px-3 text-[#f0f0f0]">Clear</button>
    <div className="ml-auto flex items-center">
      <button aria-label="Search" className="mr-[14px]"><SearchIcon size={15} /></button>
      <button aria-label="Workspace" className="flex items-center gap-[10px]">
        <svg width="17" height="13" fill="none" stroke="currentColor" aria-hidden="true">
          <path d="M.5 1h16v11.500H.5zM.5 1.500h16" strokeWidth="1.400" />
          <path d="M3 4.500h2M3 6.500h2M3 8.500h2" strokeWidth="1.300" />
        </svg>
        <ChevronDown size={10} />
      </button>
      <button aria-label="Share" className="ml-3">
        <Icon>
          <path d="M5 6.500H.8v8.700h14.400V6.500H11M8 11V1M5 4l3-3 3 3" strokeWidth="1.200" />
        </Icon>
      </button>
    </div>
  </div>
)

/* ---------- windows taskbar ---------- */

const ExplorerIcon = () => (
  <svg width="28" height="26" aria-hidden="true">
    <path d="M0 2h11l2 2h14v20H0z" fill="#f8d775" />
    <path d="M0 2h11l2 3v1H0z" fill="#e9b93c" />
    <path d="M4 3h5v2H4z" fill="#fff" />
    <path d="M0 6h27v18H0z" fill="#ffe9a2" />
    <path d="M5 25v-9q0-2 2-2h14q2 0 2 2v9h-4v-6H9v6z" fill="#37b0e5" />
  </svg>
)

const StoreIcon = () => (
  <svg width="28" height="32" fill="none" aria-hidden="true">
    <path d="M8 9c0-4 1.500-7 5-7s5 3 5 7M11 9c0-5 1.500-8 5-8s5 3 5 8" stroke="#fff" strokeWidth="1.300" />
    <path d="M1 10l26-2v22l-5 2L1 28z" fill="#fff" />
    <path d="M4 14.500l5.500-.5v5H4zM11 14l7-.6V19h-7zM4 20.500h5.500v5L4 25zM11 20.500h7V26l-7-.5z" fill="#08070a" />
  </svg>
)

const MailIcon = () => (
  <svg width="30" height="26" aria-hidden="true">
    <path d="M0 8l15-7 15 7v17H0z" fill="#fff" />
    <path d="M1 9h28l-10.500 5.500 6 6z" fill="#08070a" />
  </svg>
)

const FirefoxIcon = () => (
  <svg width="30" height="30" aria-hidden="true">
    <defs>
      <linearGradient id="fox" x1="0" y1="1" x2="1" y2="0">
        <stop offset="0" stopColor="#d8371c" />
        <stop offset=".55" stopColor="#f58220" />
        <stop offset="1" stopColor="#ffdc3c" />
      </linearGradient>
      <radialGradient id="globe" cx=".5" cy=".2" r=".9">
        <stop offset="0" stopColor="#36b0e6" />
        <stop offset="1" stopColor="#17346f" />
      </radialGradient>
    </defs>
    <circle cx="15" cy="14" r="13" fill="url(#globe)" />
    <path
      d="M3 6c.5 1 1 1.500 2 2 1-1 3-1.500 4.500-1 .5-1.500 1.500-2.500 3-3-.7 1.500-.5 3 .5 4l4 1.500c.3 1.500-1 2-3 3 .5 1.500-1 2.500-3 2 1.500 3 5 3.500 7.500 1.500 2-1.500 4 0 3 1.500-2 3-5.500 4-8.500 3.500 6 2 11-2 11-7.500 0-4-2-7.500-5-10.500 5 2 9 6.500 9 12.500C29 23.500 23 29 15 29S1 23.500 1 15.500C1 12 1.500 9 3 6z"
      fill="url(#fox)"
    />
  </svg>
)

const apps = [
  { name: 'Microsoft Edge', icon: <FaEdgeLegacy size={28} className="text-[#0078d7]" />, state: '' },
  { name: 'File Explorer', icon: <ExplorerIcon />, state: '' },
  { name: 'Store', icon: <StoreIcon />, state: '' },
  { name: 'Mail', icon: <MailIcon />, state: '' },
  { name: 'Firefox', icon: <FirefoxIcon />, state: 'open' },
  { name: 'Photoshop', icon: <PsLogo className="h-[27px] w-[28px] border-2" textClass="text-base" />, state: 'active' }
]

const Taskbar = () => (
  <footer className="flex h-[50px] shrink-0 bg-[#070608] font-['Open_Sans',sans-serif] text-white">
    <button aria-label="Start" className="flex w-[60px] items-center justify-center">
      <svg width="20" height="20" fill="#fff" aria-hidden="true">
        <path d="M0 3l8-1.200v7.700H0zM9 1.600L20 0v9.500H9zM0 10.500h8v7.700L0 17zM9 10.500h11V20L9 18.400z" />
      </svg>
    </button>
    <label className="flex w-[430px] items-center bg-[#333] pl-[11px] pr-[18px]">
      <svg width="28" height="28" fill="none" aria-hidden="true">
        <circle cx="14" cy="14" r="12" stroke="#fff" strokeWidth="3" />
      </svg>
      <input
        aria-label="Type here to search"
        placeholder="Type here to search"
        className="ml-[11px] min-w-0 flex-1 text-[16px] outline-none placeholder:text-[#a8a8a8]"
      />
      <svg width="16" height="21" fill="none" stroke="#a8a8a8" strokeWidth="1.500" aria-hidden="true">
        <rect x="4.500" y="1" width="7" height="13" rx="1" />
        <path d="M1.500 10v4.500q0 2.500 2.500 2.500h8q2.500 0 2.500-2.500V10M8 17v3M5 20h6" />
      </svg>
    </label>
    <button aria-label="Task view" className="flex w-[62px] items-center justify-center">
      <svg width="26" height="20" fill="none" stroke="#fff" strokeWidth="1.300" aria-hidden="true">
        <path d="M5.500 1.500h15v17h-15zM4 4.500H1.500v11H4M22 4.500h2.500v11H22" />
      </svg>
    </button>
    {apps.map((app) => (
      <button
        key={app.name}
        aria-label={app.name}
        className={`relative flex w-[62px] items-center justify-center ${app.state === 'active' ? 'bg-[#3c3b3e]' : ''}`}
      >
        {app.icon}
        {app.state === 'open' && <span className="absolute bottom-0 left-[6px] right-[5px] h-[3px] bg-[#76b9ed]" />}
        {app.state === 'active' && <span className="absolute inset-x-0 bottom-0 h-[3px] bg-[#76b9ed]" />}
      </button>
    ))}
    <div className="ml-auto flex items-center">
      <button aria-label="Show hidden icons" className="mr-[11px]"><ChevronUp size={20} strokeWidth={1.5} /></button>
      <button aria-label="Battery" className="mr-3">
        <svg width="20" height="14" fill="none" stroke="#fff" aria-hidden="true">
          <path d="M6 2.500h12.500v10H4.500V9M19.500 5.500v4" strokeWidth="1.300" />
          <path d="M8 5h6v5H8z" fill="#fff" stroke="none" />
          <path d="M1.500 0v3M4.500 0v3M0 3h6v2q0 2-3 2T0 5zM3 7v3" />
        </svg>
      </button>
      <button aria-label="Network" className="mr-[9px]">
        <Icon size={18}>
          <path d="M1.500 16C1.500 8 8 1.500 16 1.500M5 16C5 10 10 5 16 5M8.500 16c0-4 3.500-7.500 7.500-7.500M12 16c0-2.200 1.800-4 4-4" />
          <circle cx="15" cy="15" r="1.700" fill="currentColor" stroke="none" />
        </Icon>
      </button>
      <button aria-label="Volume muted" className="mr-3">
        <svg width="20" height="16" fill="none" stroke="#fff" strokeWidth="1.200" aria-hidden="true">
          <path d="M1 4.500h3l4-3.500v14l-4-3.500H1zM11.500 5l6.500 6.500M18 5l-6.500 6.500" />
        </svg>
      </button>
      <div className="w-[72px] text-center text-[14px] leading-[23px]">
        <div>7:33 AM</div>
        <div>9/29/2017</div>
      </div>
      <button aria-label="Notifications" className="relative ml-[21px] mr-[13px] flex h-8 w-8 items-start pt-1">
        <svg width="21" height="21" aria-hidden="true">
          <path d="M0 0h20v16h-7l-4 4v-4H0z" fill="#fff" />
          <path d="M4 4.500h12M4 8.500h12M4 12.500h7" stroke="#08070a" strokeWidth="1.300" />
        </svg>
        <span className="absolute left-[9px] top-3 flex h-5 w-5 items-center justify-center rounded-full border border-[#808080] bg-[#2b2b2b] text-[14px] leading-4">
          1
        </span>
      </button>
      <span className="h-full w-[6px] border-l border-[#808080]" />
    </div>
  </footer>
)

const App = () => (
  <div className="flex h-screen flex-col overflow-hidden bg-[#535353] font-[Roboto,sans-serif] text-[10px] leading-3 text-[#e0e0e0]">
    <MenuBar />
    <OptionsBar />
    <main className="flex min-h-0 flex-1">
      <Toolbox />
      <div className="flex min-w-0 flex-1 flex-col">
        <DocumentWindow />
        <MeasurementLog />
      </div>
      <RightDock />
    </main>
    <Taskbar />
  </div>
)

export default App
